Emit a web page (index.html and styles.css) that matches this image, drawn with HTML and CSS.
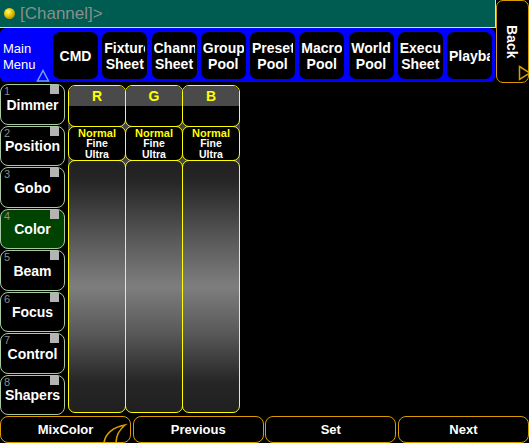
FILE: index.html
```html
<!DOCTYPE html>
<html>
<head>
<meta charset="utf-8">
<link rel="stylesheet" href="styles.css">
</head>
<body>
<div class="app">
  <div class="top">
    <div class="top-left">
      <div class="cmdline"><span class="ball"></span><span class="prompt">[Channel]&gt;</span></div>
      <div class="menu">
        <div class="main-menu">Main<br>Menu</div>
        <svg class="menu-tri" width="14" height="13" viewBox="0 0 14 13"><path d="M7 1.5 L12.5 12 L1.5 12 Z" fill="none" stroke="#6fa0ff" stroke-width="1.5"/></svg>
        <div class="mbtns">
          <div class="mbtn"><span>CMD</span></div>
          <div class="mbtn"><span>Fixture<br>Sheet</span></div>
          <div class="mbtn"><span>Channel<br>Sheet</span></div>
          <div class="mbtn"><span>Group<br>Pool</span></div>
          <div class="mbtn"><span>Preset<br>Pool</span></div>
          <div class="mbtn"><span>Macro<br>Pool</span></div>
          <div class="mbtn"><span>World<br>Pool</span></div>
          <div class="mbtn"><span>Execu<br>Sheet</span></div>
          <div class="mbtn"><span>Playback</span></div>
        </div>
      </div>
    </div>
    <div class="back">
      <span class="back-label">Back</span>
      <svg class="back-tri" width="14" height="16" viewBox="0 0 14 16"><path d="M1.5 1.5 L12 8 L1.5 14.5 Z" fill="none" stroke="#d89c00" stroke-width="1.5"/></svg>
    </div>
  </div>

  <div class="main">
    <div class="features">
      <div class="feat"><span class="num">1</span><span class="sq"></span><span class="flabel">Dimmer</span></div>
      <div class="feat"><span class="num">2</span><span class="sq"></span><span class="flabel">Position</span></div>
      <div class="feat"><span class="num">3</span><span class="sq"></span><span class="flabel">Gobo</span></div>
      <div class="feat active"><span class="num">4</span><span class="sq"></span><span class="flabel">Color</span></div>
      <div class="feat"><span class="num">5</span><span class="sq"></span><span class="flabel">Beam</span></div>
      <div class="feat"><span class="num">6</span><span class="sq"></span><span class="flabel">Focus</span></div>
      <div class="feat"><span class="num">7</span><span class="sq"></span><span class="flabel">Control</span></div>
      <div class="feat"><span class="num">8</span><span class="sq"></span><span class="flabel">Shapers</span></div>
    </div>
    <div class="grid">
      <div class="col">
        <div class="cell head"><div class="band">R</div></div>
        <div class="cell res"><span class="y">Normal</span><span>Fine</span><span>Ultra</span></div>
        <div class="cell fader"></div>
      </div>
      <div class="col">
        <div class="cell head"><div class="band">G</div></div>
        <div class="cell res"><span class="y">Normal</span><span>Fine</span><span>Ultra</span></div>
        <div class="cell fader"></div>
      </div>
      <div class="col">
        <div class="cell head"><div class="band">B</div></div>
        <div class="cell res"><span class="y">Normal</span><span>Fine</span><span>Ultra</span></div>
        <div class="cell fader"></div>
      </div>
    </div>
  </div>

  <div class="bottom">
    <div class="bbtn mix">MixColor
      <svg class="hook" width="26" height="20" viewBox="0 0 26 20"><path d="M1 20 C2 11 10 4 22 2 C16 7 13 13 13 20" fill="none" stroke="#d89c00" stroke-width="1.6"/></svg>
    </div>
    <div class="bbtn">Previous</div>
    <div class="bbtn">Set</div>
    <div class="bbtn">Next</div>
  </div>
</div>
</body>
</html>
```

FILE: styles.css
```css
html, body {
  margin: 0;
  padding: 0;
  background: #000;
}
body {
  width: 529px;
  height: 443px;
  overflow: hidden;
  font-family: "Liberation Sans", Arial, sans-serif;
  color: #fff;
}
.app {
  width: 529px;
  height: 443px;
}
.top {
  display: flex;
  height: 83px;
}
.top-left {
  width: 496px;
  display: flex;
  flex-direction: column;
}
.cmdline {
  height: 28px;
  box-sizing: border-box;
  background: #005b50;
  border-right: 1px solid #d8e0dc;
  border-bottom: 1px solid #d8e0dc;
  display: flex;
  align-items: center;
  padding-left: 4px;
  gap: 5px;
}
.ball {
  width: 11px;
  height: 11px;
  border-radius: 50%;
  background: radial-gradient(circle at 38% 35%, #fff8a0 0%, #f0d000 35%, #b08800 80%, #705000 100%);
}
.prompt {
  color: #8a8f8c;
  font-size: 17px;
  line-height: 20px;
}
.menu {
  position: relative;
  height: 54px;
  width: 495px;
  background: #0000ff;
  border-radius: 6px;
  display: flex;
  align-items: center;
  box-sizing: border-box;
}
.main-menu {
  width: 50px;
  padding-left: 3px;
  font-size: 13px;
  line-height: 16px;
  color: #fff;
  margin-top: 3px;
}
.menu-tri {
  position: absolute;
  left: 36px;
  top: 41px;
}
.mbtns {
  display: flex;
  gap: 4.25px;
  margin-top: 1px;
}
.mbtn {
  width: 45px;
  height: 47px;
  box-sizing: border-box;
  background: #000;
  border-radius: 7px;
  display: flex;
  align-items: center;
  padding: 0 2px;
}
.mbtn span {
  display: block;
  width: 100%;
  overflow: hidden;
  text-align: center;
  font-weight: bold;
  font-size: 14px;
  line-height: 16px;
  white-space: nowrap;
}
.back {
  position: relative;
  width: 33px;
  height: 83px;
  box-sizing: border-box;
  border: 1.5px solid #d89c00;
  border-radius: 7px;
  background: #000;
  overflow: hidden;
}
.back-label {
  position: absolute;
  left: 7px;
  top: 24px;
  writing-mode: vertical-rl;
  font-weight: bold;
  font-size: 14px;
  line-height: 16px;
}
.back-tri {
  position: absolute;
  left: 21px;
  top: 64px;
}
.main {
  display: flex;
  height: 331px;
  margin-top: 1px;
  gap: 3px;
}
.features {
  width: 65px;
  display: grid;
  grid-template-rows: repeat(8, 1fr);
  gap: 1px;
}
.feat {
  position: relative;
  box-sizing: border-box;
  border: 1.5px solid #a9c9a3;
  border-radius: 8px;
  background: #000;
  display: flex;
  align-items: center;
  justify-content: center;
}
.feat.active {
  background: #004200;
}
.num {
  position: absolute;
  left: 3px;
  top: 0px;
  font-size: 11px;
  line-height: 12px;
  color: #8c8c8c;
}
.sq {
  position: absolute;
  right: 5px;
  top: 0px;
  width: 9px;
  height: 9px;
  background: #b4b4b4;
}
.flabel {
  font-weight: bold;
  font-size: 14px;
  line-height: 16px;
  margin-top: 1px;
  white-space: nowrap;
}
.grid {
  display: flex;
  margin-top: 1px;
  height: 328px;
  background: linear-gradient(#000 0, #000 20px, #444 20px, #444 90px, #000 90px);
}
.col {
  width: 58px;
  display: flex;
  flex-direction: column;
}
.col + .col {
  margin-left: -1px;
}
.cell {
  box-sizing: border-box;
  border: 1.5px solid #ffff00;
  border-radius: 7px;
  background: #000;
  overflow: hidden;
}
.head {
  height: 42px;
}
.band {
  height: 20px;
  background: #4a4a4a;
  color: #ffff00;
  font-weight: bold;
  font-size: 14px;
  line-height: 20px;
  text-align: center;
}
.res {
  height: 35px;
  margin-top: -1px;
  display: flex;
  flex-direction: column;
  align-items: center;
  justify-content: center;
  font-weight: bold;
  font-size: 10.5px;
  line-height: 10.5px;
}
.res .y {
  color: #ffff00;
  font-size: 11px;
}
.fader {
  flex: 1;
  margin-top: -1px;
  background: linear-gradient(#202020 0%, #262626 8%, #5a5a5a 32%, #7e7e7e 50%, #5a5a5a 68%, #262626 88%, #202020 100%);
}
.bottom {
  display: flex;
  gap: 1.5px;
  height: 27px;
  margin-top: 1px;
}
.bbtn {
  position: relative;
  flex: 1;
  box-sizing: border-box;
  border: 1.5px solid #d89c00;
  border-radius: 8px;
  background: #000;
  display: flex;
  align-items: center;
  justify-content: center;
  font-weight: bold;
  font-size: 13px;
  overflow: hidden;
}
.hook {
  position: absolute;
  right: 1px;
  bottom: -1px;
}
```
